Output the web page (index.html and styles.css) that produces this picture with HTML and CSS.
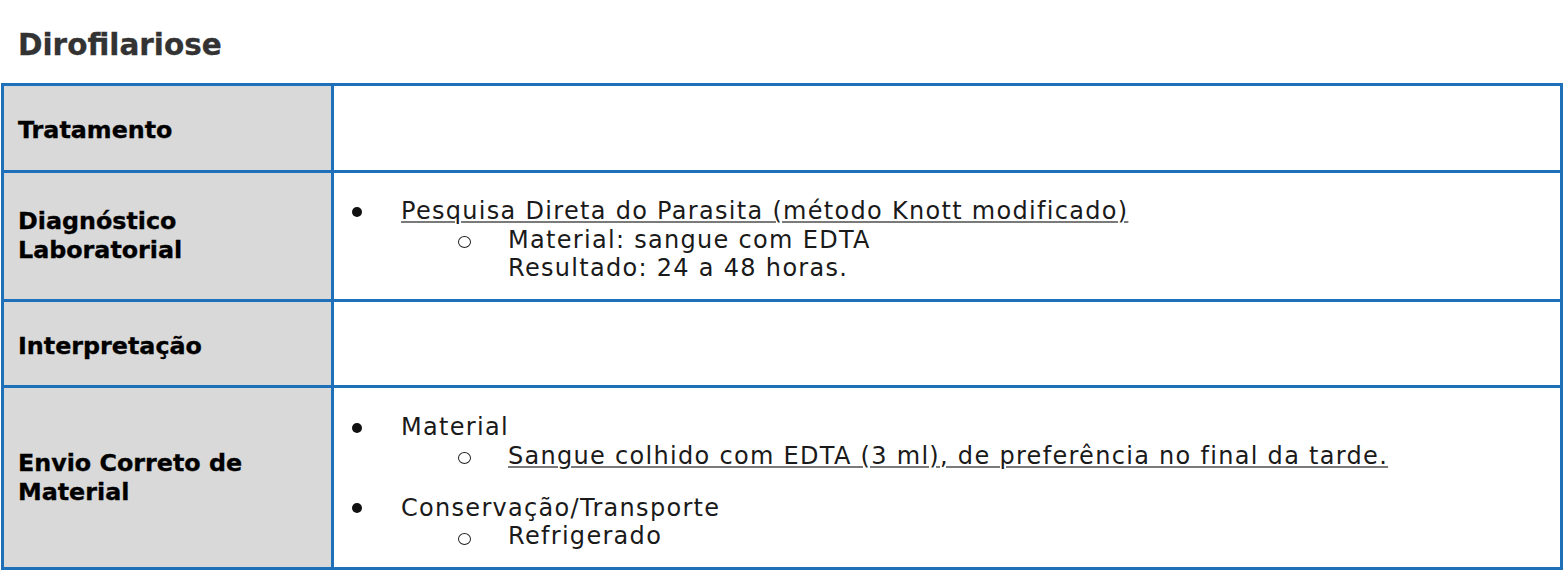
FILE: index.html
```html
<!DOCTYPE html>
<html lang="pt">
<head>
<meta charset="utf-8">
<title>Dirofilariose</title>
<link rel="stylesheet" href="styles.css">
</head>
<body>
<h1 class="title">Dirofilariose</h1>
<div class="sheet">
  <div class="label row1">Tratamento</div>
  <div class="cell row1"></div>

  <div class="label row2">Diagnóstico<br>Laboratorial</div>
  <div class="cell row2 content">
    <div class="item l1"><span class="mk"><span class="dot"></span></span><span class="tx u">Pesquisa Direta do Parasita (método Knott modificado)</span></div>
    <div class="item l2"><span class="mk"><span class="ring"></span></span><span class="tx">Material: sangue com EDTA<br>Resultado: 24 a 48 horas.</span></div>
  </div>

  <div class="label row3">Interpretação</div>
  <div class="cell row3"></div>

  <div class="label row4">Envio Correto de<br>Material</div>
  <div class="cell row4 content">
    <div class="group">
      <div class="item l1"><span class="mk"><span class="dot"></span></span><span class="tx">Material</span></div>
      <div class="item l2"><span class="mk"><span class="ring"></span></span><span class="tx u">Sangue colhido com EDTA (3 ml), de preferência no final da tarde.</span></div>
    </div>
    <div class="group">
      <div class="item l1"><span class="mk"><span class="dot"></span></span><span class="tx">Conservação/Transporte</span></div>
      <div class="item l2"><span class="mk"><span class="ring"></span></span><span class="tx">Refrigerado</span></div>
    </div>
  </div>
</div>
</body>
</html>
```
FILE: styles.css
```css
html, body {
  margin: 0;
  padding: 0;
  background: #ffffff;
}
body {
  font-family: "DejaVu Sans", "Liberation Sans", sans-serif;
  color: #1a1a1a;
}
.title {
  margin: 0 0 21px 0;
  padding: 28px 0 0 18px;
  font-size: 29.5px;
  line-height: 34px;
  font-weight: bold;
  color: #333333;
  -webkit-text-stroke: 0.3px #333333;
}
.sheet {
  margin-left: 1px;
  width: 1562px;
  box-sizing: border-box;
  border: 3px solid #1e70b8;
  display: grid;
  grid-template-columns: 330px 1fr;
  grid-template-rows: 84px 129px 86px 182px;
}
.label {
  box-sizing: border-box;
  background: #d9d9d9;
  border-right: 3px solid #1e70b8;
  display: flex;
  align-items: center;
  padding-left: 14px;
  font-weight: bold;
  font-size: 23.8px;
  line-height: 29px;
  color: #000000;
  -webkit-text-stroke: 0.35px #000000;
}
.label.row1, .label.row3 {
  padding-top: 5px;
}
.row2, .row3, .row4 {
  border-top: 3px solid #1e70b8;
}
.cell {
  box-sizing: border-box;
}
.content {
  font-size: 24px;
  line-height: 28.5px;
  letter-spacing: 1.3px;
  color: #1a1a1a;
  display: flex;
  flex-direction: column;
}
.cell.row2 {
  padding-top: 24px;
}
.cell.row4 {
  padding-top: 25px;
  gap: 23.5px;
}
.item {
  display: flex;
}
.mk {
  flex: none;
  display: flex;
  justify-content: flex-start;
}
.l1 .mk {
  width: 67px;
  padding-left: 18px;
  box-sizing: border-box;
}
.l2 .mk {
  width: 174px;
  padding-left: 124px;
  box-sizing: border-box;
}
.dot {
  margin-top: 9.5px;
  width: 10px;
  height: 10px;
  border-radius: 50%;
  background: #111111;
}
.ring {
  margin-top: 10.5px;
  width: 13px;
  height: 12px;
  box-sizing: border-box;
  border-radius: 50%;
  border: 1.4px solid #222222;
}
.u {
  text-decoration: underline;
  text-decoration-color: #7a7a7a;
  text-decoration-thickness: 2px;
  text-underline-offset: 2px;
}
```
